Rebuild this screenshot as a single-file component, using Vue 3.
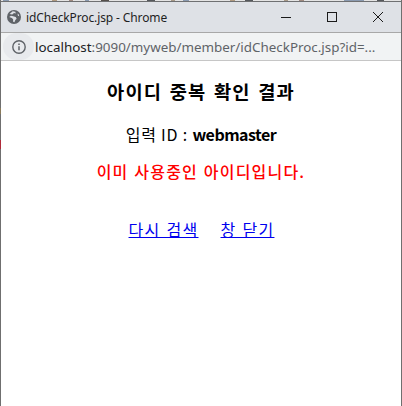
<script setup>
const title = 'idCheckProc.jsp - Chrome'
</script>

<template>
  <div class="window">
    <div class="topline"></div>
    <div class="titlebar">
      <svg class="globe" width="14" height="14" viewBox="0 0 16 16">
        <circle cx="8" cy="8" r="8" fill="#5f6368" />
        <path d="M3 4.500l3 .5 2-1.500 2 .5-.5-2-3-.5zM2.500 8l3 1 1.500 1.500v3l1.500.5 1-2.500 1.500-1.500-1-2-3-1-2.500-.5zM12 4l1.500 1 .5 2-1.500-.5z" fill="#dee1e6" />
      </svg>
      <span class="title">{{ title }}</span>
      <div class="controls">
        <svg width="12" height="12" viewBox="0 0 12 12"><path d="M1 6.500h10" stroke="#1a1a1a" fill="none" /></svg>
        <svg width="12" height="12" viewBox="0 0 12 12"><rect x="1.500" y="1.500" width="9" height="9" stroke="#1a1a1a" fill="none" /></svg>
        <svg width="12" height="12" viewBox="0 0 12 12"><path d="M1 1l10 10M11 1L1 11" stroke="#1a1a1a" fill="none" /></svg>
      </div>
    </div>
    <div class="addressbar">
      <div class="info">
        <svg width="16" height="16" viewBox="0 0 16 16">
          <circle cx="8" cy="8" r="6.200" stroke="#5f6368" stroke-width="1.400" fill="none" />
          <path d="M8 7.200v4M8 4.600v1.400" stroke="#5f6368" stroke-width="1.500" fill="none" />
        </svg>
      </div>
      <span class="url"><span class="host">localhost</span>:9090/myweb/member/idCheckProc.jsp?id=...</span>
    </div>
    <div class="page">
      <h3>아이디 중복 확인 결과</h3>
      <p class="input-id">입력 ID : <b>webmaster</b></p>
      <p class="used">이미 사용중인 아이디입니다.</p>
      <div class="links">
        <a href="#">다시 검색</a>
        <a href="#">창 닫기</a>
      </div>
    </div>
    <i class="speck speck-a"></i>
    <i class="speck speck-b"></i>
  </div>
</template>

<style>
html, body {
  margin: 0;
  background: #fff;
}
</style>

<style scoped>
.window {
  position: relative;
  width: 402px;
  height: 406px;
  box-sizing: border-box;
  border-left: 1px solid #6f6f6f;
  border-right: 1px solid #6f6f6f;
  display: flex;
  flex-direction: column;
  font-family: "Noto Sans CJK KR", "Noto Sans", sans-serif;
}

/* bits of the window behind, showing through the frame */
.speck {
  position: absolute;
  left: -1px;
  width: 1px;
}

.speck-a {
  top: 108px;
  height: 6px;
  background: #8a7a5a;
}

.speck-b {
  top: 140px;
  height: 9px;
  background: #b02a3a;
}

.topline {
  height: 2px;
  border-bottom: 1px solid #6f7072;
  box-sizing: border-box;
  background: linear-gradient(90deg,
    #e4e4e4 0 2px, #8a9ab0 2px 8px, #e4e4e4 8px 51px, #b09a80 51px 56px,
    #e4e4e4 56px 68px, #a08a80 68px 72px, #e4e4e4 72px 84px, #8a9ab0 84px 88px,
    #e4e4e4 88px 100px, #55504c 100px 108px, #e4e4e4 108px 146px, #55585c 146px 154px,
    #e4e4e4 154px 170px, #a89a88 170px 174px, #e4e4e4 174px 182px, #8a9ab0 182px 188px,
    #e4e4e4 188px 229px, #b09a80 229px 234px, #e4e4e4 234px 244px, #55585c 244px 252px,
    #e4e4e4 252px 283px, #a89a88 283px 287px, #e4e4e4 287px 298px, #a08a80 298px 303px,
    #e4e4e4 303px 343px, #8a9ab0 343px 363px, #e4e4e4 363px 376px, #55585c 376px 383px,
    #e4e4e4 383px);
}

.titlebar {
  height: 30px;
  background: #dee1e6;
  display: flex;
  align-items: center;
  padding-left: 6px;
  font-family: "Noto Sans", "Open Sans", sans-serif;
}

.globe {
  flex: none;
}

.title {
  margin-left: 5px;
  font-size: 12px;
  letter-spacing: -0.12px;
  color: #1f1f1f;
}

.controls {
  margin-left: auto;
  display: flex;
  gap: 34px;
  padding-right: 17px;
}

.addressbar {
  height: 27px;
  background: #f1f3f4;
  border-top: 1px solid #a8a8a8;
  border-bottom: 1px solid #c6c6c6;
  display: flex;
  align-items: center;
  font-family: "Noto Sans", "Open Sans", sans-serif;
}

.info {
  margin-left: 2px;
  width: 31px;
  height: 27px;
  background: #e8eaed;
  border-radius: 14px;
  display: flex;
  align-items: center;
  justify-content: center;
}

.url {
  margin-left: 1px;
  font-size: 13.400px;
  color: #5f6368;
}

.host {
  color: #202124;
}

.page {
  flex: 1;
  background: #fff;
  text-align: center;
  color: #000;
  padding-top: 17px;
}

h3 {
  margin: 0;
  font-size: 18.700px;
  line-height: 26px;
  font-weight: 700;
  letter-spacing: 1.200px;
  word-spacing: 2px;
}

.input-id {
  margin: 18px 0 0;
  font-size: 16px;
  line-height: 24px;
  letter-spacing: 0.800px;
}

.input-id b {
  letter-spacing: -0.500px;
}

.used {
  margin: 13px 0 0;
  font-size: 16px;
  line-height: 24px;
  font-weight: 500;
  letter-spacing: 1.200px;
  word-spacing: 1px;
  color: #f00;
}

.links {
  margin-top: 34px;
  padding-left: 1px;
  display: flex;
  justify-content: center;
  gap: 22px;
  font-size: 16px;
  line-height: 24px;
  letter-spacing: 1.300px;
  word-spacing: 1px;
}

.links a {
  color: #00e;
  text-decoration: underline;
}
</style>
